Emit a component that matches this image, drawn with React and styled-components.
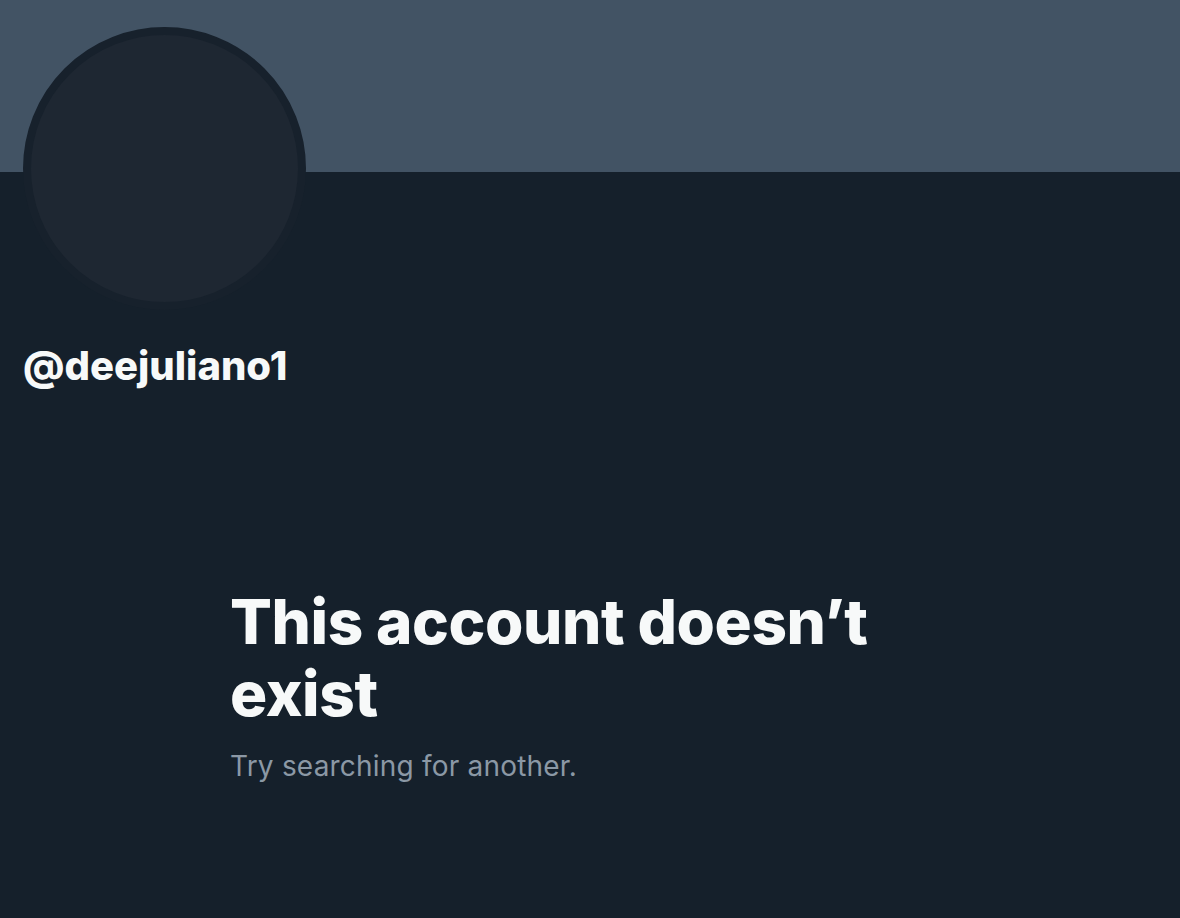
import React from "react";
import styled, { createGlobalStyle } from "styled-components";

const GlobalStyle = createGlobalStyle`
  html, body {
    margin: 0;
    padding: 0;
    background: #15202b;
  }
  body {
    font-family: Inter, "Noto Sans", Arial, sans-serif;
    -webkit-font-smoothing: antialiased;
  }
`;

const Page = styled.main`
  min-height: 100vh;
  background: #15202b;
  display: flex;
  flex-direction: column;
`;

const Banner = styled.div`
  height: 172px;
  background: #425364;
`;

const ProfileHeader = styled.section`
  display: flex;
  flex-direction: column;
  align-items: flex-start;
  padding-left: 23px;
`;

const Avatar = styled.div`
  width: 267px;
  height: 267px;
  margin-top: -145px;
  border-radius: 50%;
  background: #1e2732;
  border: 8px solid #17212c;
`;

const Handle = styled.h1`
  margin: 34px 0 0;
  font-family: Inter, "Noto Sans", sans-serif;
  font-weight: 800;
  font-size: 40px;
  line-height: 44px;
  letter-spacing: 0;
  color: #f7f9f9;
`;

const EmptyWrap = styled.section`
  display: flex;
  justify-content: center;
  padding-top: 198px;
`;

const EmptyState = styled.div`
  width: 720px;
  display: flex;
  flex-direction: column;
`;

const Title = styled.h2`
  margin: 0;
  font-family: Inter, "Noto Sans", sans-serif;
  font-weight: 800;
  font-size: 62px;
  line-height: 72px;
  letter-spacing: -0.4px;
  color: #f7f9f9;
  max-width: 672px;
`;

const Subtitle = styled.p`
  margin: 18px 0 0;
  font-family: Inter, "Noto Sans", sans-serif;
  font-weight: 400;
  font-size: 28px;
  line-height: 36px;
  letter-spacing: 0.2px;
  color: #8b98a5;
`;

export default function App() {
  return (
    <>
      <GlobalStyle />
      <Page>
        <Banner />
        <ProfileHeader>
          <Avatar />
          <Handle>@deejuliano1</Handle>
        </ProfileHeader>
        <EmptyWrap>
          <EmptyState>
            <Title>This account doesn’t exist</Title>
            <Subtitle>Try searching for another.</Subtitle>
          </EmptyState>
        </EmptyWrap>
      </Page>
    </>
  );
}
